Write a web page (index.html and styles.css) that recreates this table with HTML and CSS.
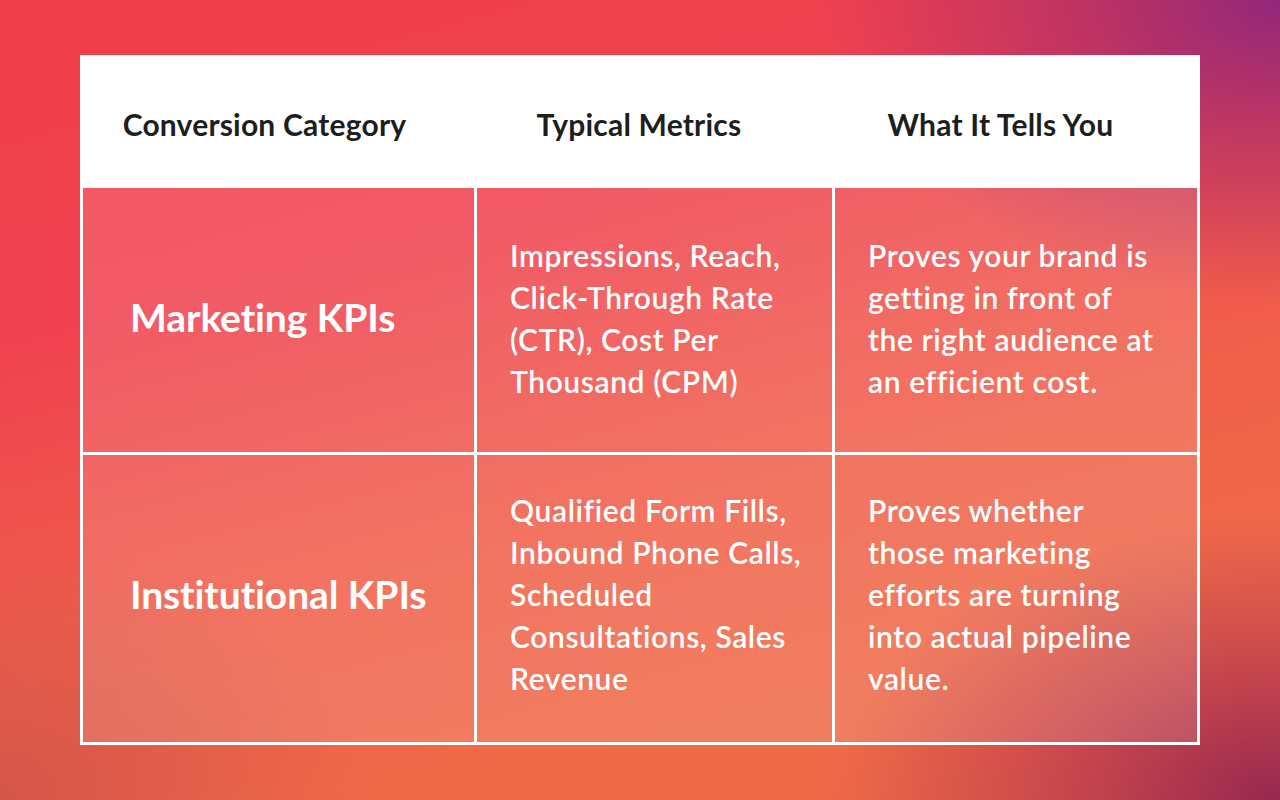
FILE: index.html
```html
<!DOCTYPE html>
<html lang="en">
<head>
<meta charset="utf-8">
<title>Conversion KPIs</title>
<link rel="stylesheet" href="styles.css">
</head>
<body>
<div class="card">
  <div class="head">Conversion Category</div>
  <div class="head">Typical Metrics</div>
  <div class="head">What It Tells You</div>

  <div class="cell cat">Marketing KPIs</div>
  <div class="cell txt">Impressions, Reach,<br>Click-Through Rate<br>(CTR), Cost Per<br>Thousand (CPM)</div>
  <div class="cell txt">Proves your brand is<br>getting in front of<br>the right audience at<br>an efficient cost.</div>

  <div class="cell cat lower">Institutional KPIs</div>
  <div class="cell txt lower">Qualified Form Fills,<br>Inbound Phone Calls,<br>Scheduled<br>Consultations, Sales<br>Revenue</div>
  <div class="cell txt lower">Proves whether<br>those marketing<br>efforts are turning<br>into actual pipeline<br>value.</div>
</div>
</body>
</html>
```

FILE: styles.css
```css
html, body {
  margin: 0;
  padding: 0;
}

body {
  width: 1280px;
  height: 800px;
  overflow: hidden;
  box-sizing: border-box;
  padding: 55px 80px 0;
  font-family: "Lato", "Roboto", "Noto Sans", sans-serif;
  background:
    radial-gradient(ellipse 460px 300px at 100% 0%, rgba(146, 40, 122, 1) 0%, rgba(160, 42, 110, 0.65) 40%, rgba(200, 50, 90, 0) 100%),
    radial-gradient(ellipse 440px 280px at 100% 100%, rgba(150, 40, 80, 1) 0%, rgba(170, 45, 80, 0.6) 45%, rgba(200, 60, 70, 0) 100%),
    radial-gradient(ellipse 360px 260px at 0% 100%, rgba(210, 84, 74, 0.9) 0%, rgba(215, 84, 74, 0) 100%),
    linear-gradient(165deg, #ef3e4c 0%, #ef4250 30%, #f0604a 60%, #ef6a48 80%, #ec6646 100%);
}

.card {
  width: 1120px;
  box-sizing: border-box;
  border: 3px solid #ffffff;
  display: grid;
  grid-template-columns: 391px 358px 365px;
  grid-template-rows: 127px 267px 290px;
}

.head {
  background: #ffffff;
  color: #1e1e1e;
  font-weight: 700;
  font-size: 30px;
  letter-spacing: 0.2px;
  display: flex;
  align-items: center;
  justify-content: center;
  padding: 4px 28px 0 0;
}

.cell {
  background: rgba(255, 255, 255, 0.13);
  border-top: 3px solid #ffffff;
  color: #ffffff;
  display: flex;
  align-items: center;
}

.cell.txt {
  border-left: 3px solid #ffffff;
  padding: 0 0 4px 33px;
  font-size: 30px;
  font-weight: 600;
  letter-spacing: 0.6px;
  line-height: 42px;
  white-space: nowrap;
}

.cat {
  padding: 0 0 6px 47px;
  font-size: 39px;
  font-weight: 700;
  letter-spacing: -0.1px;
}

.cell.lower {
  padding-bottom: 10px;
}
```
